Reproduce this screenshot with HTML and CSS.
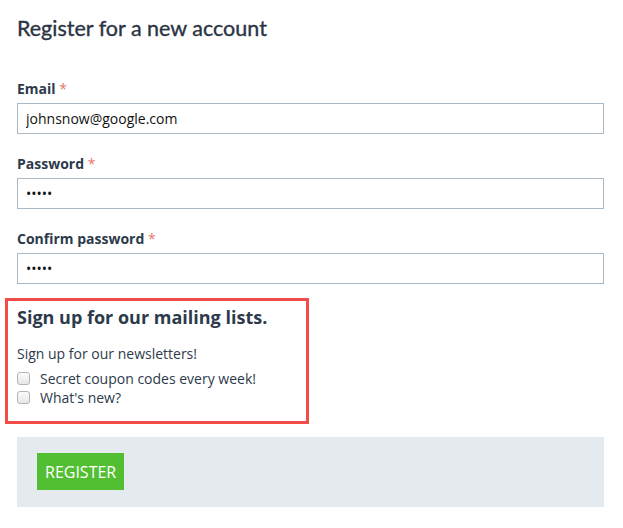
FILE: index.html
```html
<!DOCTYPE html>
<html>
<head>
<meta charset="utf-8">
<link rel="stylesheet" href="styles.css">
</head>
<body>
<div class="page">
  <h1 class="title">Register for a new account</h1>
  <form class="form">
    <div class="field">
      <label class="label">Email <span class="req">*</span></label>
      <input class="input" type="text" value="johnsnow@google.com">
    </div>
    <div class="field">
      <label class="label">Password <span class="req">*</span></label>
      <input class="input" type="password" value="12345">
    </div>
    <div class="field">
      <label class="label">Confirm password <span class="req">*</span></label>
      <input class="input" type="password" value="12345">
    </div>
    <section class="mailing">
      <h2 class="mailing-title">Sign up for our mailing lists.</h2>
      <p class="mailing-sub">Sign up for our newsletters!</p>
      <label class="check"><span class="box"></span>Secret coupon codes every week!</label>
      <label class="check"><span class="box"></span>What's new?</label>
    </section>
    <div class="actions">
      <button class="btn" type="button">REGISTER</button>
    </div>
  </form>
</div>
</body>
</html>
```
FILE: styles.css
```css
* { box-sizing: border-box; }
html, body { margin: 0; padding: 0; background: #fff; }
body { font-family: "Open Sans", "Noto Sans", sans-serif; color: #2c3a4b; }
.page { padding: 14px 19px 0 17px; }
.title {
  margin: 0;
  font-family: "Lato", "Open Sans", sans-serif;
  font-weight: 400;
  font-size: 21.5px;
  line-height: 28px;
  color: #2a3443;
  -webkit-text-stroke: 0.35px #2a3443;
}
.form { margin-top: 37px; }
.field { margin-bottom: 14px; }
.field + .field { padding-top: 6px; }
.label {
  display: block;
  font-size: 14px;
  font-weight: 700;
  line-height: 19px;
  color: #2c3a4b;
  margin-bottom: 5px;
}
.req { color: #e5786d; font-weight: 400; }
.input {
  display: block;
  width: 100%;
  height: 31px;
  border: 1px solid #a9b8c6;
  border-radius: 0;
  padding: 0 8px;
  font-family: "Open Sans", sans-serif;
  font-size: 14px;
  color: #111;
  background: #fff;
  outline: none;
}
.mailing {
  width: 304px;
  margin: 0 0 0 -12px;
  padding: 4px 9px 14px 9px;
  border: 3px solid #f24c46;
}
.mailing-title {
  margin: 0;
  font-size: 18px;
  font-weight: 700;
  line-height: 24px;
  color: #2c3a4b;
}
.mailing-sub {
  margin: 15px 0 5px;
  font-size: 14px;
  line-height: 20px;
  color: #2c3a4b;
}
.check {
  display: flex;
  align-items: center;
  min-height: 19px;
  font-size: 14px;
  line-height: 19px;
  color: #2c3a4b;
}
.box {
  width: 13px;
  height: 13px;
  border: 1px solid #b4b4b4;
  border-radius: 3px;
  background: linear-gradient(#fcfcfc, #e6e6e6);
  margin-right: 10px;
  flex: none;
}
.actions {
  margin-top: 13px;
  background: #e5eaee;
  padding: 16px 20px 17px;
}
.btn {
  display: block;
  height: 37px;
  padding: 0 8px;
  border: 0;
  background: #52bf32;
  color: #fff;
  font-family: "Open Sans", sans-serif;
  font-size: 16px;
}
```
